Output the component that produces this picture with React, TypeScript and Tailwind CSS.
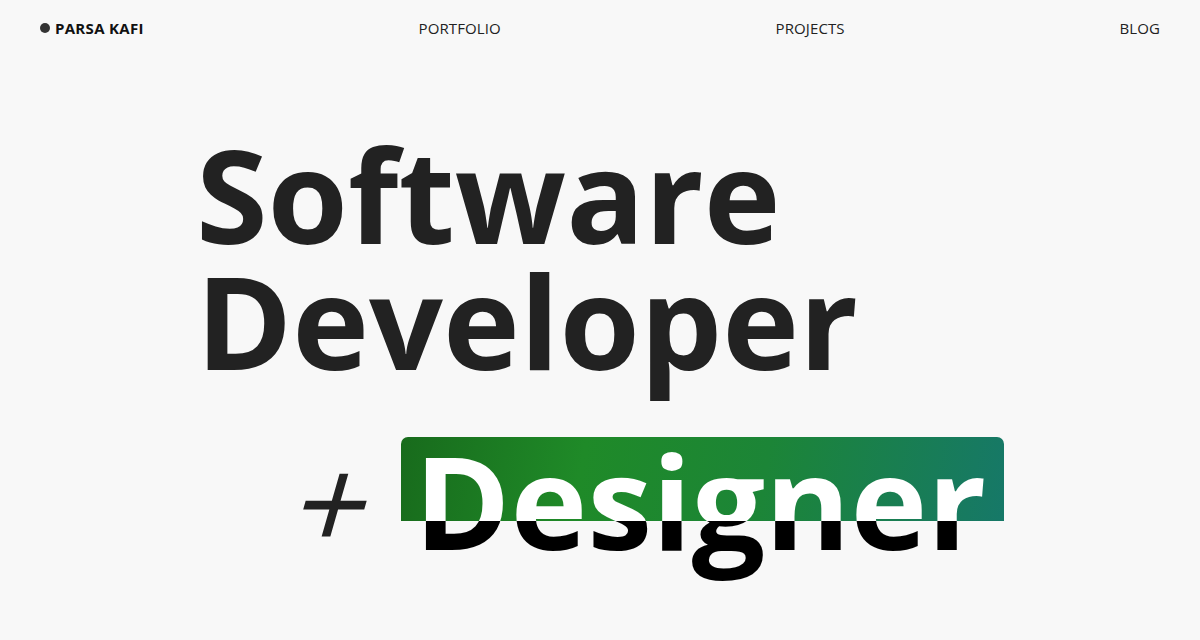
import React from "react";

export default function App() {
  return (
    <div
      className="w-[1200px] h-[640px] overflow-hidden bg-[#f8f8f8] text-[#222222]"
      style={{ fontFamily: '"Open Sans", "Noto Sans", sans-serif' }}
    >
      <nav className="flex items-center justify-between px-10 pt-4 h-[40px] text-[15px] leading-6">
        <a className="flex items-center gap-[5px] font-bold text-[#111111] tracking-[0.3px]">
          <span className="block w-[10px] h-[10px] rounded-full bg-[#333333]" />
          <span>PARSA KAFI</span>
        </a>
        <a className="text-[#222222] tracking-[0.1px]">PORTFOLIO</a>
        <a className="text-[#222222] tracking-[0.1px]">PROJECTS</a>
        <a className="text-[#222222] tracking-[0.1px]">BLOG</a>
      </nav>

      <main className="pl-[196px] mt-[91px]">
        <h1 className="font-bold text-[130px] leading-[126px] text-[#222222]">
          <span className="block">Software</span>
          <span className="block">Developer</span>
        </h1>
        <div className="flex items-start mt-[52px] pl-[103px] text-[130px] leading-none">
          <span className="inline-block font-normal text-[#222222] mr-[28px] -skew-x-[16deg] translate-y-[1px]">
            +
          </span>
          <span className="relative inline-block pl-[13px] pr-[18px]">
            <span className="absolute left-0 right-0 top-[2px] h-[84px] rounded-t-[7px] bg-[linear-gradient(100deg,#186b1c_0%,#1f8a28_30%,#1c8537_60%,#167868_100%)]" />
            <span className="relative block pb-[40px] font-bold bg-[linear-gradient(to_bottom,#ffffff_86px,#000000_86px)] bg-clip-text text-transparent">
              Designer
            </span>
          </span>
        </div>
      </main>
    </div>
  );
}
